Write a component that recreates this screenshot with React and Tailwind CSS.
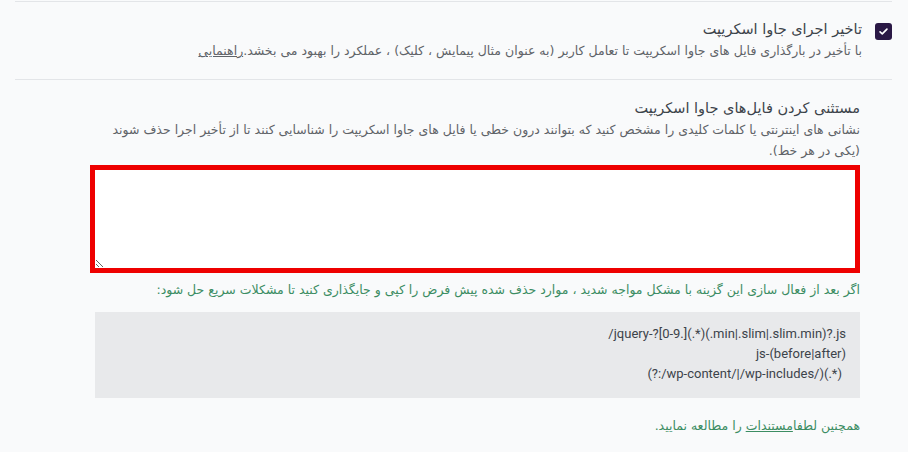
import React from "react";

const CheckIcon = () => (
  <svg viewBox="0 0 16 16" className="w-[11px] h-[11px]" fill="none">
    <path d="M3 8.5l3.2 3L13 4.5" stroke="white" strokeWidth="2.4" strokeLinecap="round" strokeLinejoin="round" />
  </svg>
);

const App = () => {
  return (
    <div
      dir="rtl"
      className="bg-[#f9fafb] h-[452px] w-[908px] overflow-hidden pt-px text-[#3c434a]"
      style={{ fontFamily: '"DejaVu Sans", "Noto Sans", sans-serif' }}
    >
      <div className="mr-[16px] ml-[15px] border-t border-[#e3e5e8]">
        {/* delay js */}
        <div className="flex items-start gap-[13px] pt-[16px] pb-[18px] border-b border-[#e3e5e8]">
          <div className="w-[17px] h-[17px] mt-[5px] rounded-[3px] bg-[#2a1845] flex items-center justify-center shrink-0">
            <CheckIcon />
          </div>
          <div>
            <h3 className="text-[14.5px] leading-[22px] font-normal text-[#3c434a]">تاخیر اجرای جاوا اسکریپت</h3>
            <p className="text-[12.5px] leading-[21px] text-[#5f6368] whitespace-nowrap">
              با تأخیر در بارگذاری فایل های جاوا اسکریپت تا تعامل کاربر (به عنوان مثال پیمایش ، کلیک) ، عملکرد را بهبود می بخشد.
              <a href="" className="underline text-[#5f6368]">راهنمایی</a>
            </p>
          </div>
        </div>

        {/* excluded files */}
        <div className="pr-[32px] pl-[75px] pt-[17px]">
          <h3 className="text-[14.5px] leading-[22px] font-normal text-[#3c434a]">مستثنی کردن فایل‌های جاوا اسکریپت</h3>
          <p className="text-[12.5px] leading-[21px] text-[#5f6368]">
            نشانی های اینترنتی یا کلمات کلیدی را مشخص کنید که بتوانند درون خطی یا فایل های جاوا اسکریپت را شناسایی کنند تا از تأخیر اجرا حذف شوند
            <br />
            (یکی در هر خط).
          </p>
          <textarea className="block w-full h-[108px] mt-[4px] bg-white border-[5px] border-[#ee0000] outline-none resize-y" />
          <p className="mt-[6px] text-[12.5px] leading-[21px] text-[#3c8d63] whitespace-nowrap">
            اگر بعد از فعال سازی این گزینه با مشکل مواجه شدید ، موارد حذف شده پیش فرض را کپی و جایگذاری کنید تا مشکلات سریع حل شود:
          </p>
          <div
            className="mt-[12px] ml-[5px] h-[86px] bg-[#e8e9eb] pr-[14px] pt-[12px] text-[13px] leading-[20px] text-[#3c434a] flex flex-col items-start"
            style={{ fontFamily: "Roboto, sans-serif" }}
          >
            <span dir="ltr">/jquery-?[0-9.](.*)(.min|.slim|.slim.min)?.js</span>
            <span dir="ltr">js-(before|after)</span>
            <span dir="ltr" className="mr-[4px]">(?:/wp-content/|/wp-includes/)(.*)</span>
          </div>
          <p className="mt-[17px] text-[12.5px] leading-[21px] text-[#3c8d63]">
            همچنین لطفا<a href="" className="underline">مستندات</a> را مطالعه نمایید.
          </p>
        </div>
      </div>
    </div>
  );
};

export default App;
